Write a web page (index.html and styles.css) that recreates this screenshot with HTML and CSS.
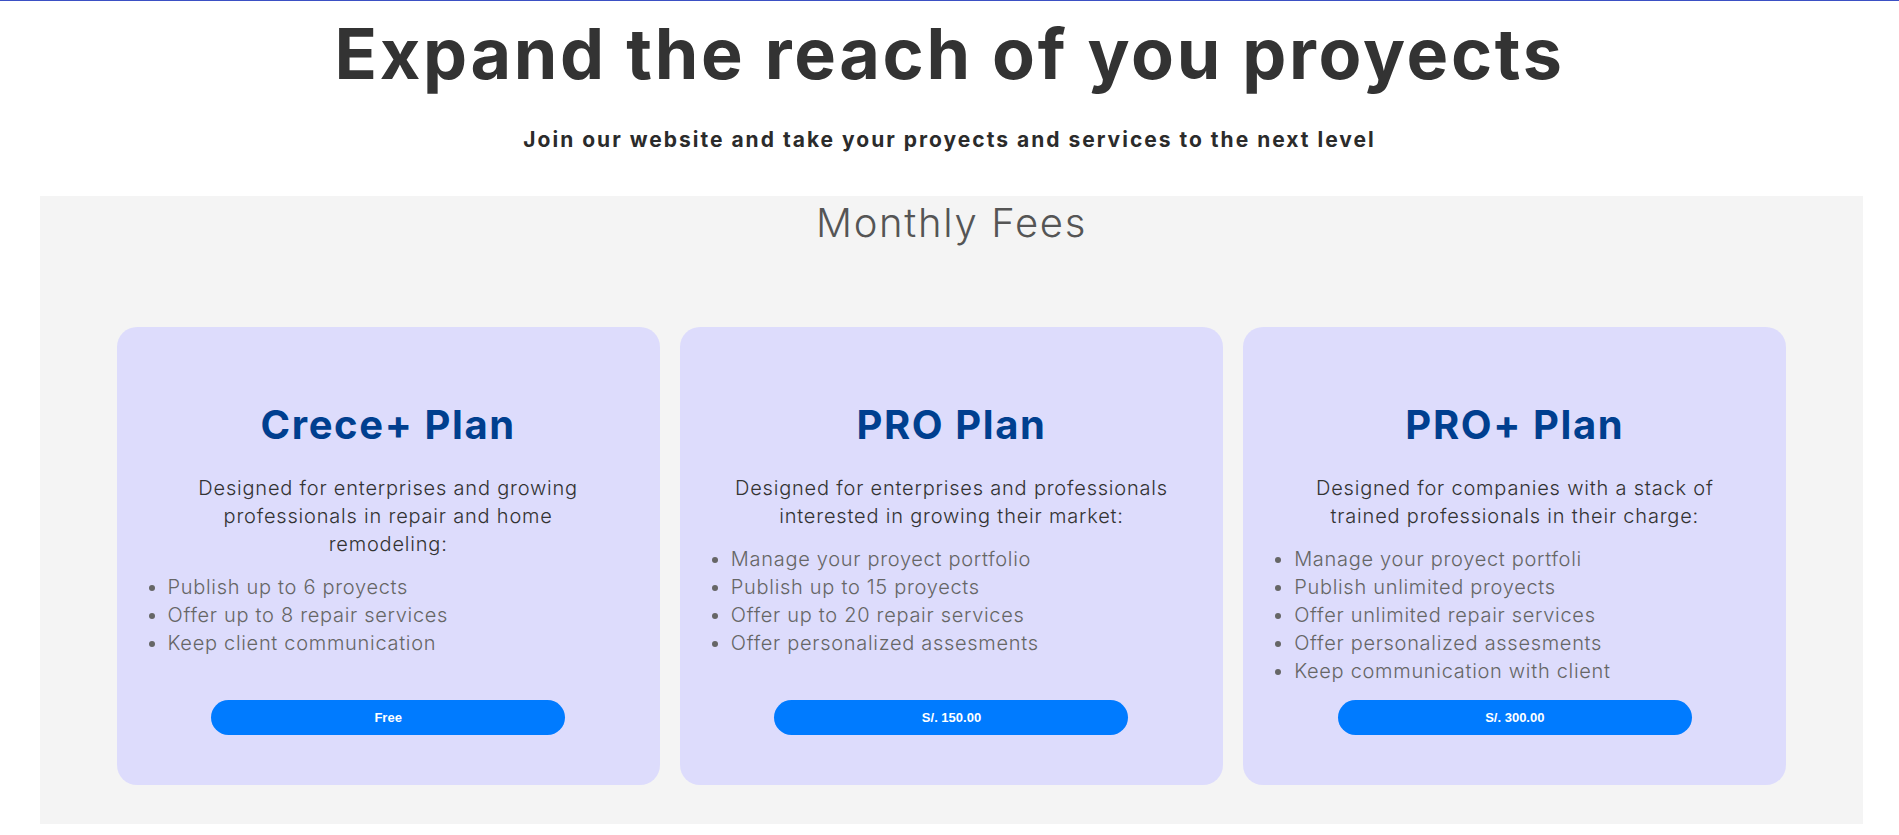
FILE: index.html
```html
<!DOCTYPE html>
<html lang="en">
<head>
<meta charset="utf-8">
<title>Monthly Fees</title>
<link rel="stylesheet" href="styles.css">
</head>
<body>
<header class="hero">
  <h1 class="hero-title">Expand the reach of you proyects</h1>
  <p class="hero-sub">Join our website and take your proyects and services to the next level</p>
</header>
<section class="fees">
  <h2 class="fees-title">Monthly Fees</h2>
  <div class="plans">
    <article class="plan">
      <h3 class="plan-name">Crece+ Plan</h3>
      <p class="plan-desc">Designed for enterprises and growing professionals in repair and home remodeling:</p>
      <ul class="plan-list">
        <li>Publish up to 6 proyects</li>
        <li>Offer up to 8 repair services</li>
        <li>Keep client communication</li>
      </ul>
      <button class="plan-btn" type="button">Free</button>
    </article>
    <article class="plan">
      <h3 class="plan-name">PRO Plan</h3>
      <p class="plan-desc">Designed for enterprises and professionals interested in growing their market:</p>
      <ul class="plan-list">
        <li>Manage your proyect portfolio</li>
        <li>Publish up to 15 proyects</li>
        <li>Offer up to 20 repair services</li>
        <li>Offer personalized assesments</li>
      </ul>
      <button class="plan-btn" type="button">S/. 150.00</button>
    </article>
    <article class="plan">
      <h3 class="plan-name">PRO+ Plan</h3>
      <p class="plan-desc">Designed for companies with a stack of trained professionals in their charge:</p>
      <ul class="plan-list">
        <li>Manage your proyect portfoli</li>
        <li>Publish unlimited proyects</li>
        <li>Offer unlimited repair services</li>
        <li>Offer personalized assesments</li>
        <li>Keep communication with client</li>
      </ul>
      <button class="plan-btn" type="button">S/. 300.00</button>
    </article>
  </div>
</section>
</body>
</html>
```

FILE: styles.css
```css
* {
  box-sizing: border-box;
}

body {
  margin: 0;
  border-top: 1px solid #3b50c4;
  background: #ffffff;
  font-family: Inter, "Open Sans", sans-serif;
  color: #333333;
}

.hero {
  padding-top: 18px;
  text-align: center;
}

.hero-title {
  margin: 0;
  font-size: 70px;
  line-height: 70px;
  font-weight: 700;
  letter-spacing: 2.7px;
  color: #333333;
}

.hero-sub {
  margin: 39px 0 0;
  font-size: 21px;
  line-height: 24px;
  font-weight: 700;
  letter-spacing: 2px;
  color: #2b2b2b;
}

.fees {
  margin: 44px 36px 11px 40px;
  padding: 3px 0 39px;
  background: #f4f4f4;
}

.fees-title {
  margin: 0;
  text-align: center;
  font-size: 40px;
  line-height: 48px;
  font-weight: 300;
  letter-spacing: 1.7px;
  color: #555555;
}

.plans {
  width: 1670px;
  margin: 80px auto 0;
  display: grid;
  grid-template-columns: repeat(3, 1fr);
  gap: 20px;
}

.plan {
  height: 458px;
  padding: 74px 51px 50px;
  background: #dddcfc;
  border-radius: 20px;
  display: flex;
  flex-direction: column;
  align-items: center;
}

.plan-name {
  margin: 0;
  font-size: 40px;
  line-height: 48px;
  font-weight: 700;
  letter-spacing: 1.6px;
  color: #003f8f;
  text-align: center;
}

.plan-desc {
  max-width: 438px;
  margin: 25px 0 0;
  font-size: 20px;
  line-height: 28px;
  font-weight: 300;
  letter-spacing: 0.8px;
  color: #333333;
  text-align: center;
}

.plan-list {
  align-self: stretch;
  margin: 15px 0 0;
  padding: 0;
  font-size: 20px;
  line-height: 28px;
  font-weight: 300;
  letter-spacing: 0.7px;
  color: #666666;
}

.plan-btn {
  margin-top: auto;
  width: 354px;
  height: 35px;
  border: none;
  border-radius: 18px;
  background: #007bff;
  color: #ffffff;
  font-family: "Liberation Sans", Arial, sans-serif;
  font-size: 13px;
  font-weight: 700;
  letter-spacing: 0;
  cursor: pointer;
}
```
